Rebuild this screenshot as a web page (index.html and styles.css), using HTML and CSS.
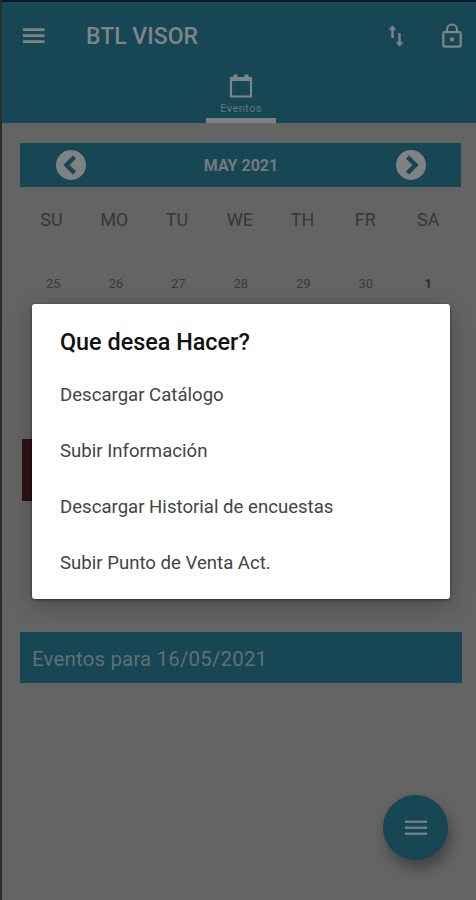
FILE: index.html
```
<!DOCTYPE html>
<html lang="es">
<head>
  <meta charset="UTF-8">
  <meta name="viewport" content="width=device-width, initial-scale=1.0">
  <title>BTL VISOR</title>
  <link rel="stylesheet" href="styles.css">
</head>
<body>
  <div class="app">
    <header class="header">
      <div class="toolbar">
        <svg class="menu" viewBox="0 0 24 16"><path d="M1 1.6h21.5M1 7.6h21.5M1 13.6h21.5"/></svg>
        <h1 class="title">BTL VISOR</h1>
        <svg class="sync" viewBox="0 0 16 22"><path d="M4.5 13V4M11.5 8v10"/><path class="head" d="M4.5 .5l4 4.2h-8zM11.5 21.5l4-4.2h-8z"/></svg>
        <svg class="lock" viewBox="0 0 22 26"><rect x="2.3" y="9.2" width="17.4" height="14.4" rx="1.5"/><path d="M6 9V6.5a5 5 0 0 1 10 0V9"/><circle cx="11" cy="16.4" r="2.2"/></svg>
      </div>
      <div class="tab">
        <svg class="cal-icon" viewBox="0 0 24 26"><path d="M2 5h20v18.5H2zM2 7h20"/><path class="rings" d="M6.5 1.5v5M17.5 1.5v5"/></svg>
        <span class="tab-text">Eventos</span>
      </div>
    </header>

    <main class="content">
      <div class="month">
        <svg class="arrow" viewBox="0 0 30 30"><circle cx="15" cy="15" r="15"/><path d="M18.5 7l-8 8 8 8"/></svg>
        <span>MAY 2021</span>
        <svg class="arrow" viewBox="0 0 30 30"><circle cx="15" cy="15" r="15"/><path d="M11.5 7l8 8-8 8"/></svg>
      </div>
      <div class="week names">
        <span>SU</span><span>MO</span><span>TU</span><span>WE</span><span>TH</span><span>FR</span><span>SA</span>
      </div>
      <div class="week days">
        <span>25</span><span>26</span><span>27</span><span>28</span><span>29</span><span>30</span><span class="current">1</span>
      </div>
      <div class="weeks">
        <div class="selected"></div>
      </div>
      <div class="events">Eventos para 16/05/2021</div>
    </main>

    <button class="fab">
      <svg class="fab-icon" viewBox="0 0 22 16"><path d="M0 1.7h22M0 7.7h22M0 13.7h22"/></svg>
    </button>

    <div class="dialog">
      <h2>Que desea Hacer?</h2>
      <ul>
        <li>Descargar Catálogo</li>
        <li>Subir Información</li>
        <li>Descargar Historial de encuestas</li>
        <li>Subir Punto de Venta Act.</li>
      </ul>
    </div>
  </div>
</body>
</html>
```
FILE: styles.css
```
*{
  margin: 0;
  padding: 0;
  box-sizing: border-box;
}
body{
  background: #646464;
  font-family: Roboto, "Liberation Sans", sans-serif;
}
svg{
  display: block;
  flex: none;
  fill: none;
  stroke: #7f8587;
}
span, h1, h2, li, .events{
  white-space: nowrap;
}
.app{
  position: relative;
  height: 900px;
  overflow: hidden;
  border-left: 2px solid #2c2d2f;
}
.header{
  height: 123px;
  background: #174655;
  border-top: 2px solid #071b24;
}
.toolbar{
  display: flex;
  align-items: center;
  height: 67px;
  padding: 0 13px 0 20px;
}
.menu{
  width: 24px;
  height: 16px;
  stroke-width: 2.6;
}
.title{
  width: 113px;
  margin-left: 40px;
  margin-right: auto;
  padding-top: 2px;
  font-size: 23px;
  font-weight: 500;
  color: #7f8587;
}
.sync{
  width: 16px;
  height: 22px;
  margin-right: 37px;
  stroke-width: 2.4;
}
.sync .head{
  fill: #7f8587;
  stroke: none;
}
.lock{
  width: 22px;
  height: 26px;
  stroke-width: 2.2;
}
.lock circle{
  fill: #7f8587;
  stroke: none;
}
.tab{
  display: flex;
  flex-direction: column;
  align-items: center;
  width: 70px;
  height: 54px;
  margin-left: 204px;
  padding-top: 4px;
  border-bottom: 5px solid #7f8082;
}
.cal-icon{
  width: 24px;
  height: 26px;
  stroke-width: 2.2;
}
.rings{
  stroke-width: 4;
}
.tab-text{
  margin-top: 3px;
  font-size: 11px;
  line-height: 13px;
  letter-spacing: 0.4px;
  color: #66767d;
}
.content{
  padding: 20px 14px 0 18px;
}
.month{
  display: flex;
  align-items: center;
  justify-content: space-between;
  width: 441px;
  height: 44px;
  padding: 0 35px 0 36px;
  background: #174655;
  color: #747b7e;
  font-size: 16px;
  font-weight: 700;
}
.arrow{
  width: 30px;
  height: 30px;
  stroke: #174655;
  stroke-width: 4.5;
}
.arrow circle{
  fill: #7f8182;
  stroke: none;
}
.week{
  display: grid;
  grid-template-columns: repeat(7, 62.8px);
  text-align: center;
}
.names{
  height: 64px;
  padding-top: 22px;
  font-size: 18px;
  line-height: 21px;
  color: #373737;
}
.days{
  grid-template-columns: repeat(7, 62.5px);
  margin-left: 2px;
  height: 52px;
  padding-top: 25px;
  font-size: 13px;
  line-height: 15px;
  color: #3b3b3b;
}
.current{
  font-weight: 700;
  color: #303030;
}
.weeks{
  height: 329px;
  padding: 136px 0 0 2px;
}
.selected{
  width: 60px;
  height: 62px;
  background: #2e1216;
}
.events{
  width: 442px;
  height: 51px;
  padding-left: 12px;
  background: #174655;
  color: #5f7077;
  font-size: 20.5px;
  line-height: 55px;
  letter-spacing: 0.15px;
}
.fab{
  position: absolute;
  right: 28px;
  bottom: 40px;
  display: flex;
  align-items: center;
  justify-content: center;
  width: 65px;
  height: 65px;
  border: 0;
  border-radius: 50%;
  background: #174655;
  box-shadow: 3px 8px 14px rgba(0, 0, 0, 0.35);
}
.fab-icon{
  width: 22px;
  height: 16px;
  stroke: #6b7b82;
  stroke-width: 2.6;
}
.dialog{
  position: absolute;
  left: 30px;
  top: 304px;
  width: 418px;
  height: 295px;
  padding: 22px 28px;
  border-radius: 3px;
  background: #fff;
  box-shadow: 0 6px 24px rgba(0, 0, 0, 0.25), 0 1px 3px rgba(0, 0, 0, 0.5);
}
.dialog h2{
  height: 40px;
  font-size: 23.4px;
  font-weight: 500;
  line-height: 32px;
  color: #111;
}
.dialog ul{
  list-style: none;
}
.dialog li{
  height: 56px;
  font-size: 18.6px;
  line-height: 59px;
  color: #444;
}
```
